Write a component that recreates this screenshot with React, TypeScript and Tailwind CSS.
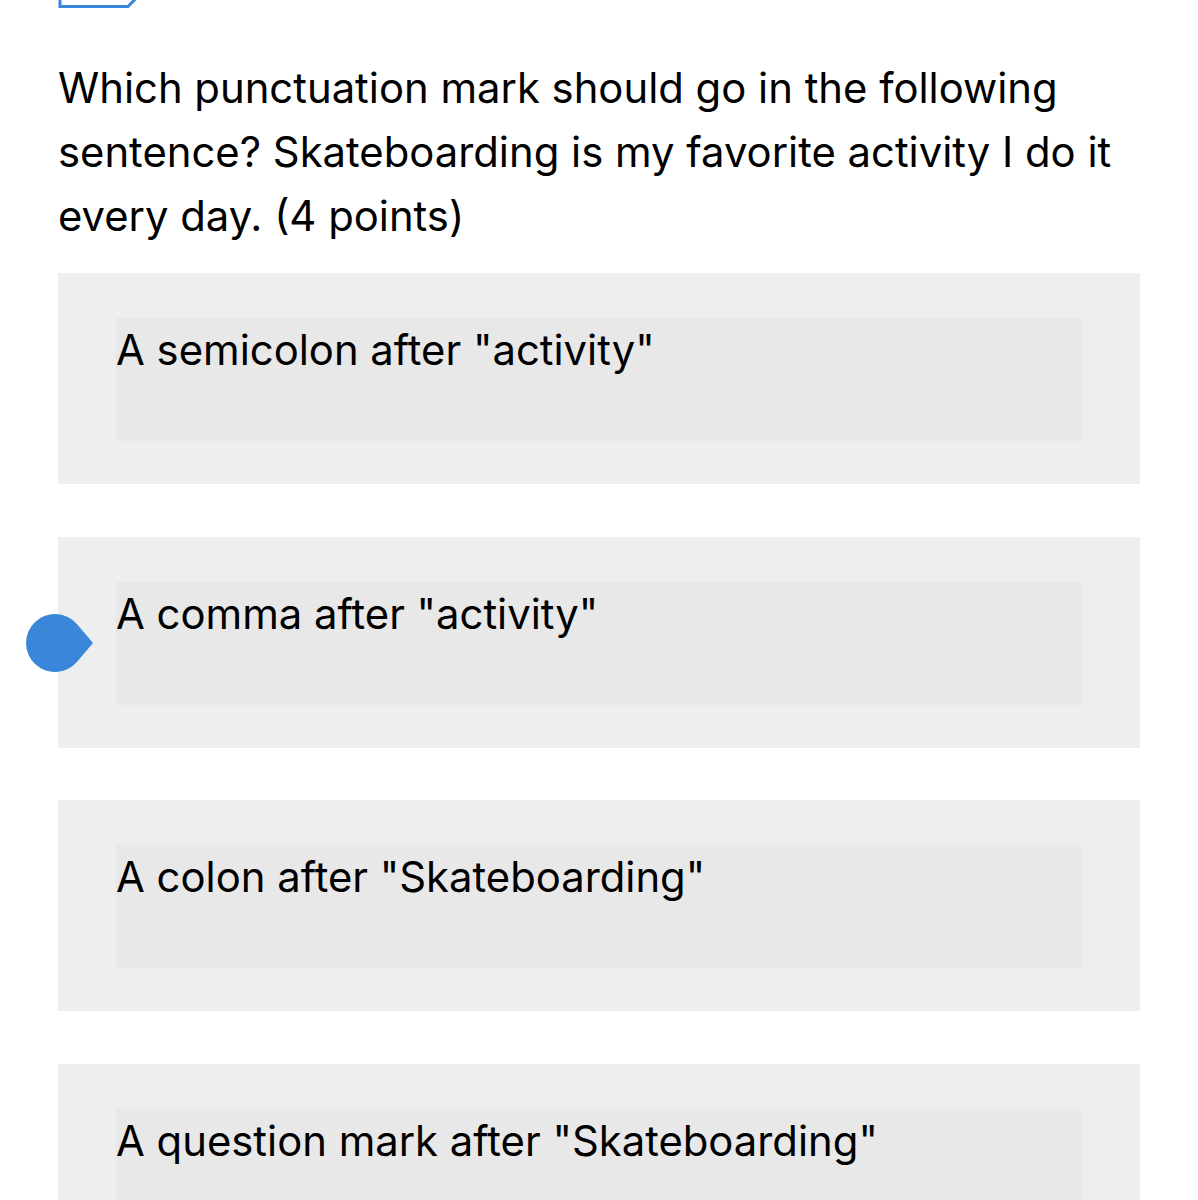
const options = [
  'A semicolon after "activity"',
  'A comma after "activity"',
  'A colon after "Skateboarding"',
  'A question mark after "Skateboarding"',
];

const selected = 1;

export default function App() {
  return (
    <div
      className="relative min-h-[1200px] overflow-hidden bg-white px-[58px] pt-[56px] text-black"
      style={{ fontFamily: "Inter, 'Noto Sans', sans-serif" }}
    >
      <svg
        className="absolute left-[57px] top-[-40px]"
        width="84"
        height="50"
        viewBox="0 0 84 50"
        fill="none"
      >
        <path
          d="M3 0 V46.5 H71 L80 37.5 V0"
          stroke="#3b87d9"
          strokeWidth="3"
        />
      </svg>

      <p className="text-[41.8px] leading-[64px]">
        Which punctuation mark should go in the following sentence? Skateboarding is
        my favorite activity I do it every day. (4 points)
      </p>

      <div className="mt-[25px] flex flex-col gap-[52.7px]">
        {options.map((opt, i) => (
          <div key={opt} className="relative bg-[#eeeeee] px-[58px] pb-[43px] pt-[45px]">
            {i === selected && (
              <svg
                className="absolute left-[-32px] top-[76px]"
                width="68"
                height="60"
                viewBox="0 0 68 60"
              >
                <path
                  d="M51.1 11.2 L67 30 L51.1 48.8 A29 29 0 1 1 51.1 11.2 Z"
                  fill="#3a86d8"
                />
              </svg>
            )}
            <div className="h-[123px] bg-[#e8e8e8] text-[41.8px] leading-[64px]">{opt}</div>
          </div>
        ))}
      </div>
    </div>
  );
}
